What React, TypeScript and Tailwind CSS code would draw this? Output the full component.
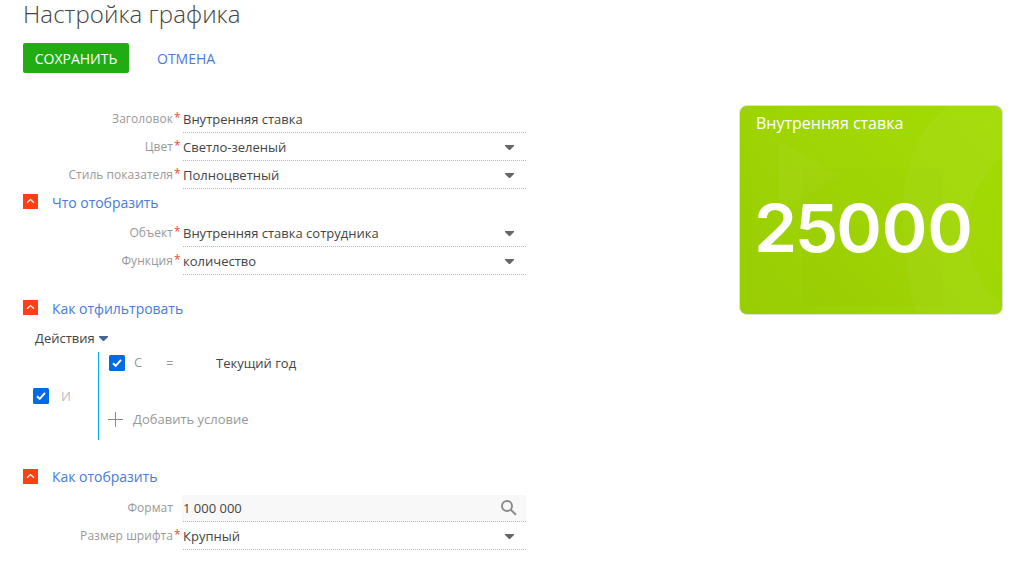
import React from "react";

function Arrow({ className = "fill-[#666]" }: { className?: string }) {
  return (
    <svg width="9" height="5" viewBox="0 0 9 5" className={className}>
      <path d="M0 0h9v1L5 5H4L0 1z" />
    </svg>
  );
}

function SearchIcon() {
  return (
    <svg width="18" height="18" viewBox="0 0 18 18" className="fill-none stroke-[#8c8c8c]">
      <circle cx="7" cy="7" r="5" strokeWidth="2" />
      <path d="M10.7 10.7l5.3 5.1" strokeWidth="2" />
    </svg>
  );
}

type FieldProps = {
  label: string;
  value: string;
  required?: boolean;
  kind?: "text" | "select" | "lookup";
};

function Field({ label, value, required = true, kind = "select" }: FieldProps) {
  return (
    <div className="flex h-7 w-[526px]">
      <div className="w-[173px] pt-[5px] text-right text-[12px] leading-[18px] tracking-[0.05px] whitespace-nowrap text-[#999]">
        {label}
      </div>
      <div className="w-[9px] pt-1 pl-px text-[12px] leading-[18px] text-[#ef4b32]">{required ? "*" : ""}</div>
      <div
        className={
          "relative flex h-7 flex-1 justify-between pl-px " + (kind === "lookup" ? "bg-[linear-gradient(#fff_1px,#f8f8f8_1px)]" : "")
        }
      >
        <span className="pt-[5px] text-[13px] leading-[18px] whitespace-nowrap text-[#444]">{value}</span>
        {kind === "select" && (
          <span className="pt-3 pr-3">
            <Arrow />
          </span>
        )}
        {kind === "lookup" && (
          <span className="pt-[5px] pr-2">
            <SearchIcon />
          </span>
        )}
        <div className="absolute bottom-0 left-0 h-px w-full bg-[repeating-linear-gradient(90deg,#fff_0_1px,#b8b8b8_1px_2px)]" />
      </div>
    </div>
  );
}

function SectionTitle({ children, textClass = "pt-1" }: { children: string; textClass?: string }) {
  return (
    <div className="flex h-7 items-start pl-[23px]">
      <svg width="15" height="15" viewBox="0 0 15 15" className="mt-[5px] fill-none">
        <path d="M0 0h15v15H0z" className="fill-[#ff4013]" />
        <path d="M4 8.8l3.5-3.3L11 8.8" className="stroke-white" strokeWidth="1.2" />
      </svg>
      <h2 className={"pl-[14px] text-[14px] leading-5 tracking-[-0.03px] whitespace-nowrap text-[#4a7bd9] " + textClass}>{children}</h2>
    </div>
  );
}

function Check() {
  return (
    <svg width="16" height="16" viewBox="0 0 16 16" className="shrink-0 fill-none">
      <rect width="16" height="16" rx="1.5" className="fill-[#006be5]" />
      <path d="M4 8.2l2.7 2.6L12 4.9" className="stroke-white" strokeWidth="2" />
    </svg>
  );
}

function Indicator() {
  return (
    <div className="relative mt-[105px] ml-[213px] h-[210px] w-[264px] shrink-0 overflow-hidden rounded-[8px] border border-[#dce0d8] bg-[linear-gradient(50deg,#98cd00,#9fd600_55%,#a2dc00)]">
      <svg width="262" height="208" viewBox="0 0 262 208" className="absolute inset-0 fill-white">
        <path d="M12 12h241v196H12z" opacity="0.02" />
        <path d="M39 34L99 70L39 104z" opacity="0.03" />
        <path d="M62 62h141v138H62z" className="fill-[#668800]" opacity="0.015" />
        <path d="M208 0Q165 32 163 100Q162 160 176 208H262V197Q230 173 228 127Q227 82 262 50V0z" opacity="0.04" />
      </svg>
      <div className="relative pt-[6px] pl-4 text-[16px] leading-[22px] whitespace-nowrap text-white">Внутренняя ставка</div>
      <div className="relative mt-[54px] ml-[14px] w-[220px] origin-left scale-x-[1.05] text-[66px] leading-[80px] font-semibold whitespace-nowrap text-white [font-family:Inter,sans-serif]">
        <span className="tracking-[-2.2px]">25</span>
        <span className="tracking-[-0.2px]">000</span>
      </div>
    </div>
  );
}

export default function App() {
  return (
    <div className="flex h-[562px] w-[1017px] overflow-hidden bg-white [font-family:'Open_Sans',sans-serif]">
      <main className="w-[526px] shrink-0">
        <h1 className="h-[43px] pl-[23px] text-[24px] leading-[28px] font-light tracking-[0.08px] whitespace-nowrap text-[#444]">Настройка графика</h1>
        <div className="flex h-[62px] items-start pl-[23px]">
          <button className="h-[30px] w-[106px] rounded-[2px] bg-[#22ac14] pt-px text-[14px] leading-[30px] text-white">СОХРАНИТЬ</button>
          <button className="ml-7 h-[30px] pt-px text-[14px] leading-[30px] text-[#4a7bd9]">ОТМЕНА</button>
        </div>
        <Field label="Заголовок" value="Внутренняя ставка" kind="text" />
        <Field label="Цвет" value="Светло-зеленый" />
        <Field label="Стиль показателя" value="Полноцветный" />
        <SectionTitle>Что отобразить</SectionTitle>
        <div className="pt-[2px]">
          <Field label="Объект" value="Внутренняя ставка сотрудника" />
          <Field label="Функция" value="количество" />
        </div>
        <div className="pt-5">
          <SectionTitle>Как отфильтровать</SectionTitle>
        </div>
        <div className="flex h-[29px] items-start pt-[6px] pl-[35px] text-[13px] leading-[18px] text-[#444]">
          <span>Действия</span>
          <span className="pt-[7px] pl-1">
            <Arrow className="block fill-[#44649b]" />
          </span>
        </div>
        <div className="flex h-[88px]">
          <div className="flex w-[98px] items-center gap-3 pl-[33px] text-[13px] text-[#bbb]">
            <Check />
            <span className="pt-px">И</span>
          </div>
          <div className="w-px bg-[#00b0e8]" />
          <div className="flex-1 text-[13px] text-[#999]">
            <div className="flex h-[22px] items-center pl-[10px]">
              <Check />
              <span className="w-[41px] pl-[9px]">С</span>
              <span className="w-[50px] pt-px">=</span>
              <span className="pt-px text-[#444]">Текущий год</span>
            </div>
            <div className="mt-[35px] flex h-5 items-center gap-[10px] pl-[9px]">
              <svg width="15" height="15" viewBox="0 0 15 15" className="stroke-[#888]">
                <path d="M7.5 0v15M0 7.5h15" />
              </svg>
              <span className="pt-[2px]">Добавить условие</span>
            </div>
          </div>
        </div>
        <div className="pt-6">
          <SectionTitle textClass="pt-[3px]">Как отобразить</SectionTitle>
          <div className="pt-[2px]">
            <Field label="Формат" value="1 000 000" required={false} kind="lookup" />
            <Field label="Размер шрифта" value="Крупный" />
          </div>
        </div>
      </main>
      <Indicator />
    </div>
  );
}
